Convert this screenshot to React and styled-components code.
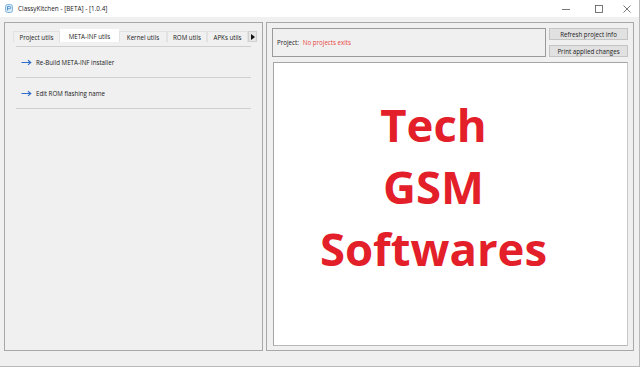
import styled, { createGlobalStyle } from "styled-components";

const GlobalStyle = createGlobalStyle`
  html, body {
    margin: 0;
    padding: 0;
    background: #f0f0f0;
  }
  body {
    font-family: "Open Sans", "Noto Sans", "Liberation Sans", sans-serif;
    color: #1a1a1a;
  }
`

const Window = styled.div`
  width: 640px;
  height: 367px;
  box-sizing: border-box;
  display: flex;
  flex-direction: column;
  background: #f0f0f0;
  border-right: 1px solid #b9b9b9;
  border-bottom: 1px solid #b9b9b9;
  position: relative;
  overflow: hidden;
`

const TitleBar = styled.div`
  height: 17px;
  flex-shrink: 0;
  background: #ffffff;
  display: flex;
  align-items: center;
  padding-left: 5px;
  gap: 5px;
  font-size: 6.4px;
  color: #222;
`

const TitleText = styled.span`
  flex: 1;
`

const Controls = styled.div`
  display: flex;
  align-items: center;
  height: 100%;
`

const ControlButton = styled.div`
  width: ${(p) => p.$w}px;
  height: 100%;
  display: flex;
  align-items: center;
  justify-content: center;
`

const Body = styled.div`
  flex: 1;
  display: flex;
  gap: 3px;
  padding: 5px 5px 15px 4px;
  min-height: 0;
`

const Panel = styled.div`
  border: 1px solid #a8a8a8;
  box-sizing: border-box;
  display: flex;
  flex-direction: column;
  ${(p) => (p.$fixed ? `width: ${p.$fixed}px; flex-shrink: 0;` : "flex: 1;")}
`

const LeftPanel = styled(Panel)`
  padding: 6px 5px 0 8px;
`

const RightPanel = styled(Panel)`
  padding: 5px 5px 4px 5px;
`

const TabStrip = styled.div`
  display: flex;
  align-items: flex-end;
  height: 13px;
`

const TabsViewport = styled.div`
  display: flex;
  align-items: flex-end;
  width: 235px;
  overflow: hidden;
  height: 100%;
`

const Tab = styled.div`
  flex-shrink: 0;
  width: ${(p) => p.$w}px;
  height: ${(p) => (p.$active ? 13 : 11)}px;
  box-sizing: border-box;
  display: flex;
  align-items: center;
  justify-content: center;
  white-space: nowrap;
  font-size: 6.2px;
  background: ${(p) => (p.$active ? "#ffffff" : "#f0f0f0")};
  border: 1px solid ${(p) => (p.$active ? "#ffffff" : "#e2e2e2")};
  border-bottom: none;
  color: #1a1a1a;
`

const ScrollButton = styled.div`
  width: 9px;
  height: 11px;
  box-sizing: border-box;
  background: #e6e6e6;
  border: 1px solid #d0d0d0;
  display: flex;
  align-items: center;
  justify-content: center;
`

const TabPage = styled.div`
  margin: 4px 6px 0 3px;
  border-top: 1px solid #cfcfcf;
`

const ActionRow = styled.div`
  height: 31px;
  box-sizing: border-box;
  border-bottom: 1px solid #cfcfcf;
  display: flex;
  align-items: center;
  gap: 4px;
  padding-left: 5px;
  font-size: 6.2px;
  color: #1a1a1a;
`

const TopRow = styled.div`
  display: flex;
  gap: 3px;
  height: 29px;
`

const GroupBox = styled.div`
  flex: 1;
  border: 1px solid #9a9a9a;
  display: flex;
  align-items: center;
  padding-left: 4px;
  gap: 4px;
  font-size: 6.2px;
`

const Label = styled.span`
  color: ${(p) => p.$color || "#1a1a1a"};
`

const ButtonColumn = styled.div`
  width: 79px;
  display: flex;
  flex-direction: column;
  justify-content: space-between;
`

const WinButton = styled.div`
  height: 12px;
  box-sizing: border-box;
  background: #e1e1e1;
  border: 1px solid #c4c4c4;
  display: flex;
  align-items: center;
  justify-content: center;
  font-size: 6.2px;
  color: #1a1a1a;
`

const PictureBox = styled.div`
  flex: 1;
  margin: 5px 0 0 1px;
  background: #ffffff;
  border: 1px solid #a5a5a5;
  border-right-color: #c9c9c9;
  border-bottom-color: #b8b8b8;
  display: flex;
  flex-direction: column;
  align-items: center;
  justify-content: center;
  padding: 0 34px 36px 0;
`

const BigLine = styled.div`
  font-family: "Open Sans", "Noto Sans", sans-serif;
  font-weight: 700;
  font-size: 45.5px;
  line-height: 62px;
  color: #e3202a;
`

const Grip = styled.div`
  position: absolute;
  right: 1px;
  bottom: 1px;
  width: 8px;
  height: 8px;
`

const ArrowIcon = () => (
  <svg width="11" height="7" viewBox="0 0 11 7">
    <path d="M0.5 3.5 H9.5 M7 1.2 L9.8 3.5 L7 5.8" stroke="#2f6cc8" strokeWidth="1.1" fill="none" />
  </svg>
)

const AppIcon = () => (
  <svg width="8" height="9" viewBox="0 0 8 9">
    <rect x="0.5" y="0.5" width="7" height="8" rx="2" fill="#d8ecf8" stroke="#6aa6d6" strokeWidth="0.8" />
    <path d="M2.5 2.5 V6.5 M2.5 2.5 H4.5 Q5.8 2.5 5.8 3.6 Q5.8 4.7 4.5 4.7 H2.5" stroke="#3d7fc0" strokeWidth="0.8" fill="none" />
  </svg>
)

const tabs = [
  { label: "Project utils", w: 47 },
  { label: "META-INF utils", w: 59, active: true },
  { label: "Kernel utils", w: 48 },
  { label: "ROM utils", w: 40 },
  { label: "APKs utils", w: 41 },
]

const actions = ["Re-Build META-INF installer", "Edit ROM flashing name"]

const App = () => {
  return (
    <>
      <GlobalStyle />
      <Window>
        <TitleBar>
          <AppIcon />
          <TitleText>ClassyKitchen - [BETA] - [1.0.4]</TitleText>
          <Controls>
            <ControlButton $w={34}>
              <svg width="8" height="8" viewBox="0 0 8 8">
                <path d="M0 4.5 H8" stroke="#555" strokeWidth="0.8" />
              </svg>
            </ControlButton>
            <ControlButton $w={32}>
              <svg width="8" height="8" viewBox="0 0 8 8">
                <rect x="0.5" y="0.5" width="7" height="7" stroke="#555" strokeWidth="0.8" fill="none" />
              </svg>
            </ControlButton>
            <ControlButton $w={24}>
              <svg width="8" height="8" viewBox="0 0 8 8">
                <path d="M0.5 0.5 L7.5 7.5 M7.5 0.5 L0.5 7.5" stroke="#555" strokeWidth="0.8" />
              </svg>
            </ControlButton>
          </Controls>
        </TitleBar>
        <Body>
          <LeftPanel $fixed={259}>
            <TabStrip>
              <TabsViewport>
                {tabs.map((t) => (
                  <Tab key={t.label} $w={t.w} $active={t.active}>
                    {t.label}
                  </Tab>
                ))}
              </TabsViewport>
              <ScrollButton>
                <svg width="4" height="6" viewBox="0 0 4 6">
                  <path d="M0 0 L4 3 L0 6 Z" fill="#111" />
                </svg>
              </ScrollButton>
            </TabStrip>
            <TabPage>
              {actions.map((a) => (
                <ActionRow key={a}>
                  <ArrowIcon />
                  {a}
                </ActionRow>
              ))}
            </TabPage>
          </LeftPanel>
          <RightPanel>
            <TopRow>
              <GroupBox>
                <Label>Project:</Label>
                <Label $color="#e8463f">No projects exits</Label>
              </GroupBox>
              <ButtonColumn>
                <WinButton>Refresh project info</WinButton>
                <WinButton>Print applied changes</WinButton>
              </ButtonColumn>
            </TopRow>
            <PictureBox>
              <BigLine>Tech</BigLine>
              <BigLine>GSM</BigLine>
              <BigLine>Softwares</BigLine>
            </PictureBox>
          </RightPanel>
        </Body>
        <Grip>
          <svg width="8" height="8" viewBox="0 0 8 8">
            <g fill="#bdbdbd">
              <rect x="6" y="2" width="1" height="1" />
              <rect x="4" y="4" width="1" height="1" />
              <rect x="6" y="4" width="1" height="1" />
              <rect x="2" y="6" width="1" height="1" />
              <rect x="4" y="6" width="1" height="1" />
              <rect x="6" y="6" width="1" height="1" />
            </g>
          </svg>
        </Grip>
      </Window>
    </>
  )
}

export default App
